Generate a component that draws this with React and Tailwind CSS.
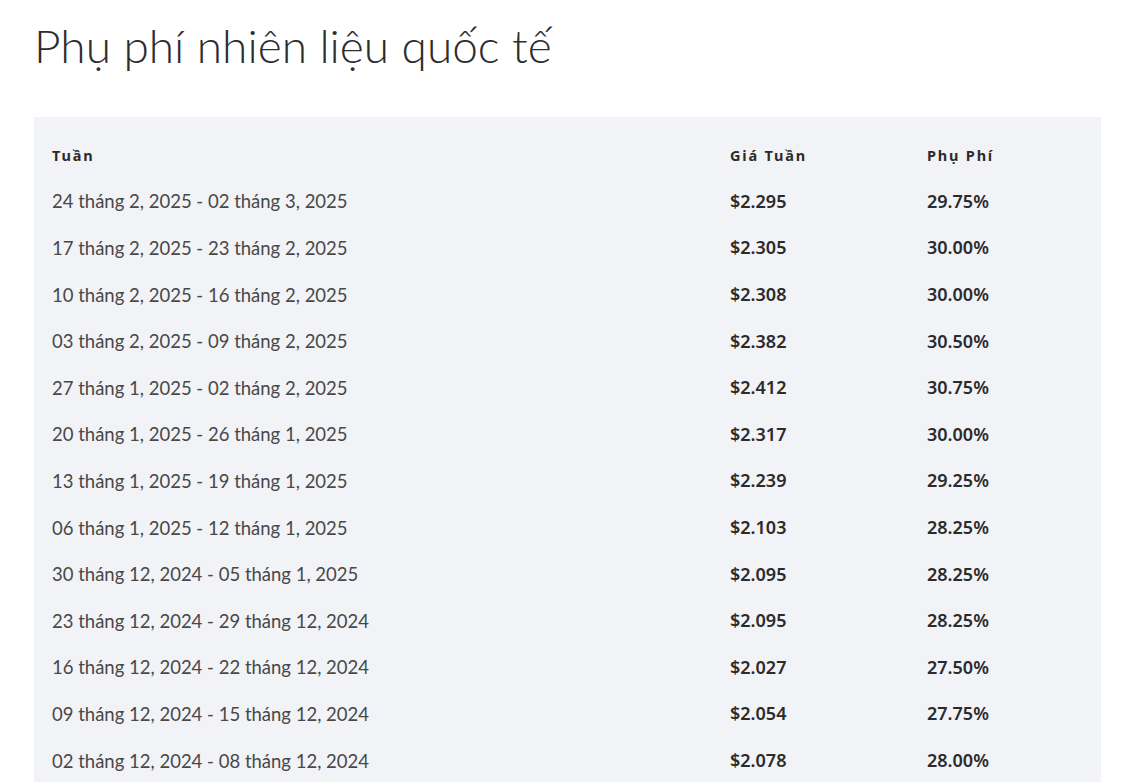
import React from "react";

const rows = [
    ["24 tháng 2, 2025 - 02 tháng 3, 2025", "$2.295", "29.75%"],
    ["17 tháng 2, 2025 - 23 tháng 2, 2025", "$2.305", "30.00%"],
    ["10 tháng 2, 2025 - 16 tháng 2, 2025", "$2.308", "30.00%"],
    ["03 tháng 2, 2025 - 09 tháng 2, 2025", "$2.382", "30.50%"],
    ["27 tháng 1, 2025 - 02 tháng 2, 2025", "$2.412", "30.75%"],
    ["20 tháng 1, 2025 - 26 tháng 1, 2025", "$2.317", "30.00%"],
    ["13 tháng 1, 2025 - 19 tháng 1, 2025", "$2.239", "29.25%"],
    ["06 tháng 1, 2025 - 12 tháng 1, 2025", "$2.103", "28.25%"],
    ["30 tháng 12, 2024 - 05 tháng 1, 2025", "$2.095", "28.25%"],
    ["23 tháng 12, 2024 - 29 tháng 12, 2024", "$2.095", "28.25%"],
    ["16 tháng 12, 2024 - 22 tháng 12, 2024", "$2.027", "27.50%"],
    ["09 tháng 12, 2024 - 15 tháng 12, 2024", "$2.054", "27.75%"],
    ["02 tháng 12, 2024 - 08 tháng 12, 2024", "$2.078", "28.00%"],
];

const App = () => {
    return (
        <section className="bg-white min-h-screen px-[34px] pt-[17px] overflow-hidden">
            {/* Title */}
            <h1 className="font-['Lato',sans-serif] font-light text-[46px] leading-[58px] text-[#2d2d2d]">
                Phụ phí nhiên liệu quốc tế
            </h1>

            {/* Table */}
            <div className="mt-[42px] w-[1067px] bg-[#f2f3f7] pt-[17px] pl-[18px]">
                <div className="grid grid-cols-[678px_197px_1fr] h-[44px] items-center font-['Noto_Sans',sans-serif] font-bold text-[14.5px] tracking-[1.8px] text-[#2b2b2b]">
                    <div>Tuần</div>
                    <div>Giá Tuần</div>
                    <div>Phụ Phí</div>
                </div>
                {rows.map(([week, price, fee]) => (
                    <div
                        key={week}
                        className="grid grid-cols-[678px_197px_1fr] h-[46.6px] items-center"
                    >
                        <div className="pt-[2px] font-['Lato',sans-serif] text-[18.5px] text-[#484848]">
                            {week}
                        </div>
                        <div className="font-['Noto_Sans',sans-serif] font-semibold text-[18px] text-[#2b2b2b]">
                            {price}
                        </div>
                        <div className="font-['Noto_Sans',sans-serif] font-semibold text-[18px] text-[#2b2b2b]">
                            {fee}
                        </div>
                    </div>
                ))}
            </div>
        </section>
    );
};

export default App;
